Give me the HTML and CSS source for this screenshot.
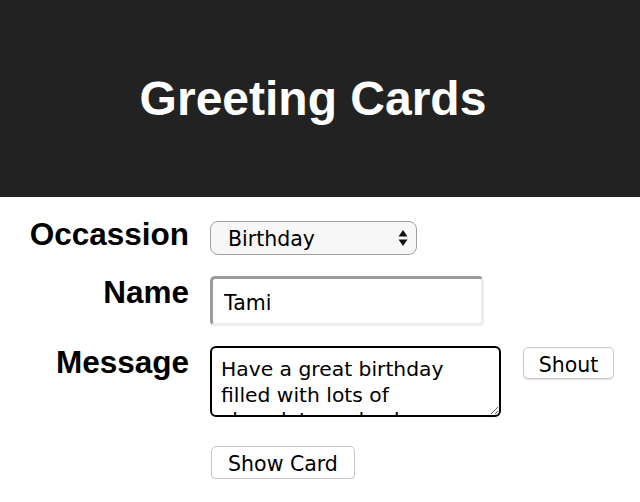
FILE: index.html
```html
<!DOCTYPE html>
<html>
<head>
<meta charset="utf-8">
<link rel="stylesheet" href="styles.css">
</head>
<body>
<header class="hero">
  <h1 class="title">Greeting Cards</h1>
</header>
<form class="form">
  <div class="row row-occasion">
    <label class="label">Occassion</label>
    <div class="select-wrap">
      <select class="select">
        <option>Birthday</option>
      </select>
      <svg class="arrows" width="10" height="18" viewBox="0 0 10 18"><path d="M5 1 L9.5 7.5 H0.5 Z M5 17 L9.5 10.5 H0.5 Z" fill="#111"/></svg>
    </div>
  </div>
  <div class="row row-name">
    <label class="label">Name</label>
    <input class="input" type="text" value="Tami">
  </div>
  <div class="row row-message">
    <label class="label">Message</label>
    <textarea class="textarea">Have a great birthday filled with lots of chocolate and cake</textarea>
    <button type="button" class="btn btn-shout">Shout</button>
  </div>
  <div class="row row-show">
    <span class="label"></span>
    <button type="button" class="btn btn-show">Show Card</button>
  </div>
</form>
</body>
</html>
```
FILE: styles.css
```css
html, body {
  margin: 0;
  padding: 0;
  background: #fff;
}
body {
  font-family: "Liberation Sans", Arial, sans-serif;
  color: #000;
}
.hero {
  background: #222222;
  height: 197px;
  display: flex;
  align-items: center;
  justify-content: center;
  padding-right: 14px;
}
.title {
  margin: 0;
  color: #fff;
  font-family: "Liberation Sans", Arial, sans-serif;
  font-weight: bold;
  font-size: 48px;
  line-height: 56px;
}
.form {
  display: flex;
  flex-direction: column;
}
.row {
  display: flex;
  align-items: flex-start;
}
.label {
  width: 189px;
  margin-right: 21px;
  text-align: right;
  font-weight: bold;
  font-size: 31.5px;
  line-height: 36px;
  flex: none;
}
.row-occasion { margin-top: 19px; }
.row-name { margin-top: 19px; }
.row-message { margin-top: 18px; }
.row-show { margin-top: 29px; }

.select-wrap {
  position: relative;
  margin-top: 5px;
}
.select {
  appearance: none;
  -webkit-appearance: none;
  width: 207px;
  height: 34px;
  box-sizing: border-box;
  border: 1.5px solid #a0a0a0;
  border-radius: 8px;
  background: #f7f7f7;
  font-family: "DejaVu Sans", sans-serif;
  font-size: 20.5px;
  color: #000;
  padding: 1px 0 0 17px;
  margin: 0;
  display: block;
}
.arrows {
  position: absolute;
  right: 9px;
  top: 8px;
  pointer-events: none;
}
.input {
  width: 274px;
  height: 50px;
  box-sizing: border-box;
  margin: 2px 0 0 0;
  border-style: solid;
  border-width: 3px;
  border-color: #9b9b9b #ececec #ececec #9b9b9b;
  border-radius: 5px;
  padding: 3px 0 0 11px;
  font-family: "DejaVu Sans", sans-serif;
  font-size: 20.5px;
  color: #000;
  background: #fff;
  outline: none;
}
.textarea {
  width: 291px;
  height: 71px;
  box-sizing: border-box;
  margin: 2px 0 0 0;
  border: 2px solid #000;
  border-radius: 6px;
  padding: 9px 9px 0 9px;
  font-family: "DejaVu Sans", sans-serif;
  font-size: 20.3px;
  line-height: 25.5px;
  color: #000;
  resize: both;
  overflow: hidden;
  outline: none;
}
.btn {
  font-family: "DejaVu Sans", sans-serif;
  font-size: 20.5px;
  color: #000;
  background: #fff;
  border: 1px solid #c8c8c8;
  border-radius: 5px;
  box-shadow: 0 1px 1px rgba(0,0,0,0.12);
  padding: 3px 0 0 0;
  margin: 0;
}
.btn-shout {
  width: 91px;
  height: 32px;
  margin-left: 22px;
  margin-top: 3px;
}
.btn-show {
  width: 144px;
  height: 33px;
  margin-left: 1px;
}
```
